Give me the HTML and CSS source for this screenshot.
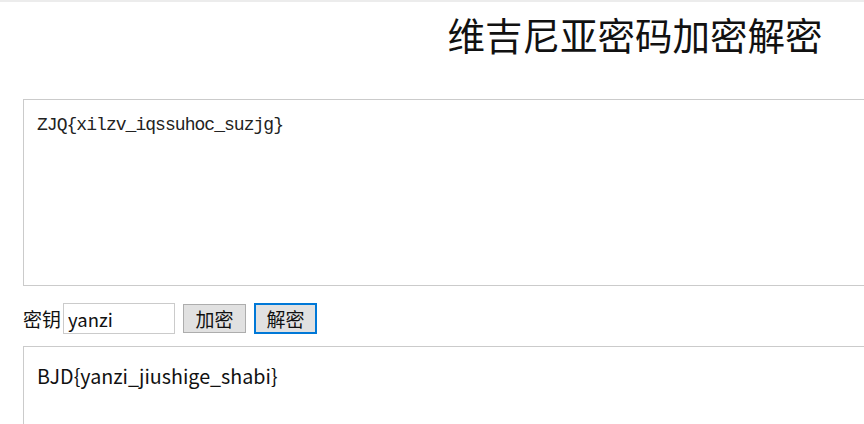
FILE: index.html
```html
<!DOCTYPE html>
<html lang="zh">
<head>
<meta charset="utf-8">
<title>维吉尼亚密码加密解密</title>
<link rel="stylesheet" href="styles.css">
</head>
<body>
<div class="topline"></div>
<div class="wrap">
  <h1 class="title">维吉尼亚密码加密解密</h1>
  <textarea class="source">ZJQ{xilzv_iqssuhoc_suzjg}</textarea>
  <div class="row">
    <label class="label">密钥</label><input class="key" type="text" value="yanzi">
    <button class="btn">加密</button>
    <button class="btn btn-focus">解密</button>
  </div>
  <div class="result">BJD{yanzi_jiushige_shabi}</div>
</div>
</body>
</html>
```

FILE: styles.css
```css
html, body {
  margin: 0;
  padding: 0;
  background: #fff;
  overflow: hidden;
}
body {
  font-family: "Noto Sans CJK SC", "Noto Sans", sans-serif;
  color: #111;
}
.topline {
  height: 2px;
  background: #ececec;
}
.wrap {
  width: 1224px;
  padding-left: 23px;
}
.title {
  margin: 0;
  height: 97px;
  padding-top: 12px;
  box-sizing: border-box;
  font-size: 37.5px;
  line-height: 40px;
  font-weight: normal;
  text-align: center;
  color: #111;
}
.source {
  display: block;
  box-sizing: border-box;
  width: 1224px;
  height: 187px;
  margin: 0;
  padding: 14px 13px;
  border: 1px solid #cbcbcb;
  resize: none;
  font-family: "Liberation Mono", monospace;
  font-size: 18px;
  letter-spacing: -0.96px;
  line-height: 22px;
  color: #222;
}
.row {
  display: flex;
  align-items: center;
  margin-top: 17px;
  height: 31px;
}
.label {
  font-size: 19px;
  width: 40px;
  line-height: 31px;
}
.key {
  box-sizing: border-box;
  width: 112px;
  height: 31px;
  margin: 0 8px 0 0;
  padding: 0 4px;
  border: 1px solid #cbcbcb;
  font-family: "Noto Sans CJK SC", "Noto Sans", sans-serif;
  font-size: 18.5px;
  color: #111;
  outline: none;
}
.btn {
  box-sizing: border-box;
  width: 63px;
  height: 29px;
  margin: 0 8px 0 0;
  padding: 0;
  background: #e1e1e1;
  border: 1px solid #adadad;
  border-radius: 0;
  font-family: "Noto Sans CJK SC", sans-serif;
  font-size: 19px;
  line-height: 25px;
  color: #111;
}
.btn-focus {
  height: 31px;
  width: 63px;
  border: 2px solid #0078d7;
}
.result {
  box-sizing: border-box;
  margin-top: 12px;
  width: 1224px;
  height: 200px;
  padding: 15px 13px;
  border: 1px solid #cbcbcb;
  font-size: 19.7px;
  line-height: 28px;
  color: #111;
}
```
